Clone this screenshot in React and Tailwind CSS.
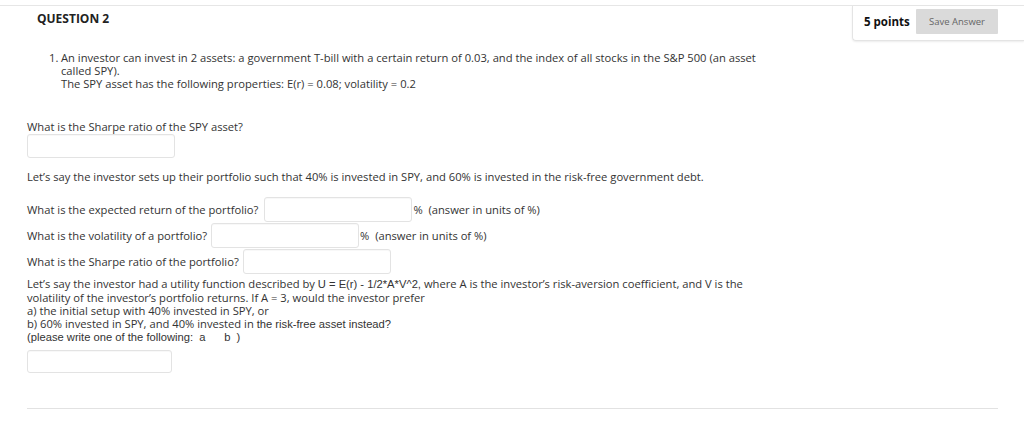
import React from 'react';

const Field = ({ className }) => (
  <input
    type="text"
    className={`bg-white border border-[#e3e3e3] rounded-[3px] shadow-[inset_0_1px_1px_rgba(0,0,0,0.03)] outline-none ${className}`}
  />
);

const arial = "font-['Liberation_Sans',Arial,sans-serif]";

export default function App() {
  return (
    <div className="w-[1024px] h-[433px] bg-white pt-[5px] font-['Open_Sans','Noto_Sans',sans-serif] text-[#333] text-[11.2px] leading-[13px] overflow-hidden">
      {/* top rule */}
      <div className="h-px bg-[#e6e6e6]" />

      {/* header */}
      <div className="flex h-[35px]">
        <h2 className="pl-[37px] pt-[5px] text-[12px] leading-[16px] font-bold text-[#222]">QUESTION 2</h2>
        <div className="ml-auto w-[172px] h-[35px] flex items-center justify-between pl-[11px] pr-[26px] pb-[4px] border-l border-b border-[#e4e4e4] rounded-bl-[4px] shadow-[0_1px_2px_rgba(0,0,0,0.08)]">
          <span className="text-[11.5px] font-bold text-[#111]">5 points</span>
          <button className="w-[82px] h-[25px] bg-[#dadada] text-[9.5px] text-[#666] rounded-[1px]">Save Answer</button>
        </div>
      </div>

      {/* question stem */}
      <div className="mt-[10px] pl-[49px] flex">
        <span className="w-[12px]">1.</span>
        <div>
          <div className="whitespace-nowrap">An investor can invest in 2 assets: a government T-bill with a certain return of 0.03, and the index of all stocks in the S&amp;P 500 (an asset</div>
          <div className="whitespace-nowrap">called SPY).</div>
          <div className="whitespace-nowrap">The SPY asset has the following properties: E(r) = 0.08; volatility = 0.2</div>
        </div>
      </div>

      <div className="pl-[27px]">
        <p className="mt-[30px]">What is the Sharpe ratio of the SPY asset?</p>
        <Field className="block mt-[1px] w-[148px] h-[24px]" />

        <p className="mt-[12px]">Let’s say the investor sets up their portfolio such that 40% is invested in SPY, and 60% is invested in the risk-free government debt.</p>

        <div className="mt-[14px] flex flex-col gap-px">
          <div className="flex items-center h-[25px]">
            <span>What is the expected return of the portfolio?</span>
            <Field className="ml-[6px] w-[148px] h-[25px]" />
            <span className="ml-px">%&nbsp;&nbsp;(answer in units of %)</span>
          </div>
          <div className="flex items-center h-[25px]">
            <span>What is the volatility of a portfolio?</span>
            <Field className="ml-[4px] w-[148px] h-[25px]" />
            <span className="ml-px">%&nbsp;&nbsp;(answer in units of %)</span>
          </div>
          <div className="flex items-center h-[25px]">
            <span>What is the Sharpe ratio of the portfolio?</span>
            <Field className="ml-[4px] w-[148px] h-[25px]" />
          </div>
        </div>

        <div className="mt-[3px]">
          <div className="whitespace-nowrap">
            Let’s say the investor had a utility function described by <span className={arial}>U = E(r) - 1/2*A*V^2,</span> where A is the investor’s risk-aversion coefficient, and V is the
          </div>
          <div className="whitespace-nowrap">volatility of the investor’s portfolio returns. If A = 3, would the investor prefer</div>
          <div className="whitespace-nowrap">a) the initial setup with 40% invested in SPY, or</div>
          <div className="whitespace-nowrap">
            b) 60% invested in SPY, and 40% invested in <span className={arial}>the risk-free asset instead?</span>
          </div>
          <div className={`whitespace-nowrap ${arial}`}>(please write one of the following:&nbsp; a&nbsp;&nbsp;&nbsp;&nbsp;&nbsp;&nbsp;b&nbsp; )</div>
        </div>
        <Field className="block mt-[6px] w-[145px] h-[23px]" />
      </div>

      {/* bottom rule */}
      <div className="mt-[35px] ml-[27px] w-[971px] h-px bg-[#e2e2e2]" />
    </div>
  );
}
